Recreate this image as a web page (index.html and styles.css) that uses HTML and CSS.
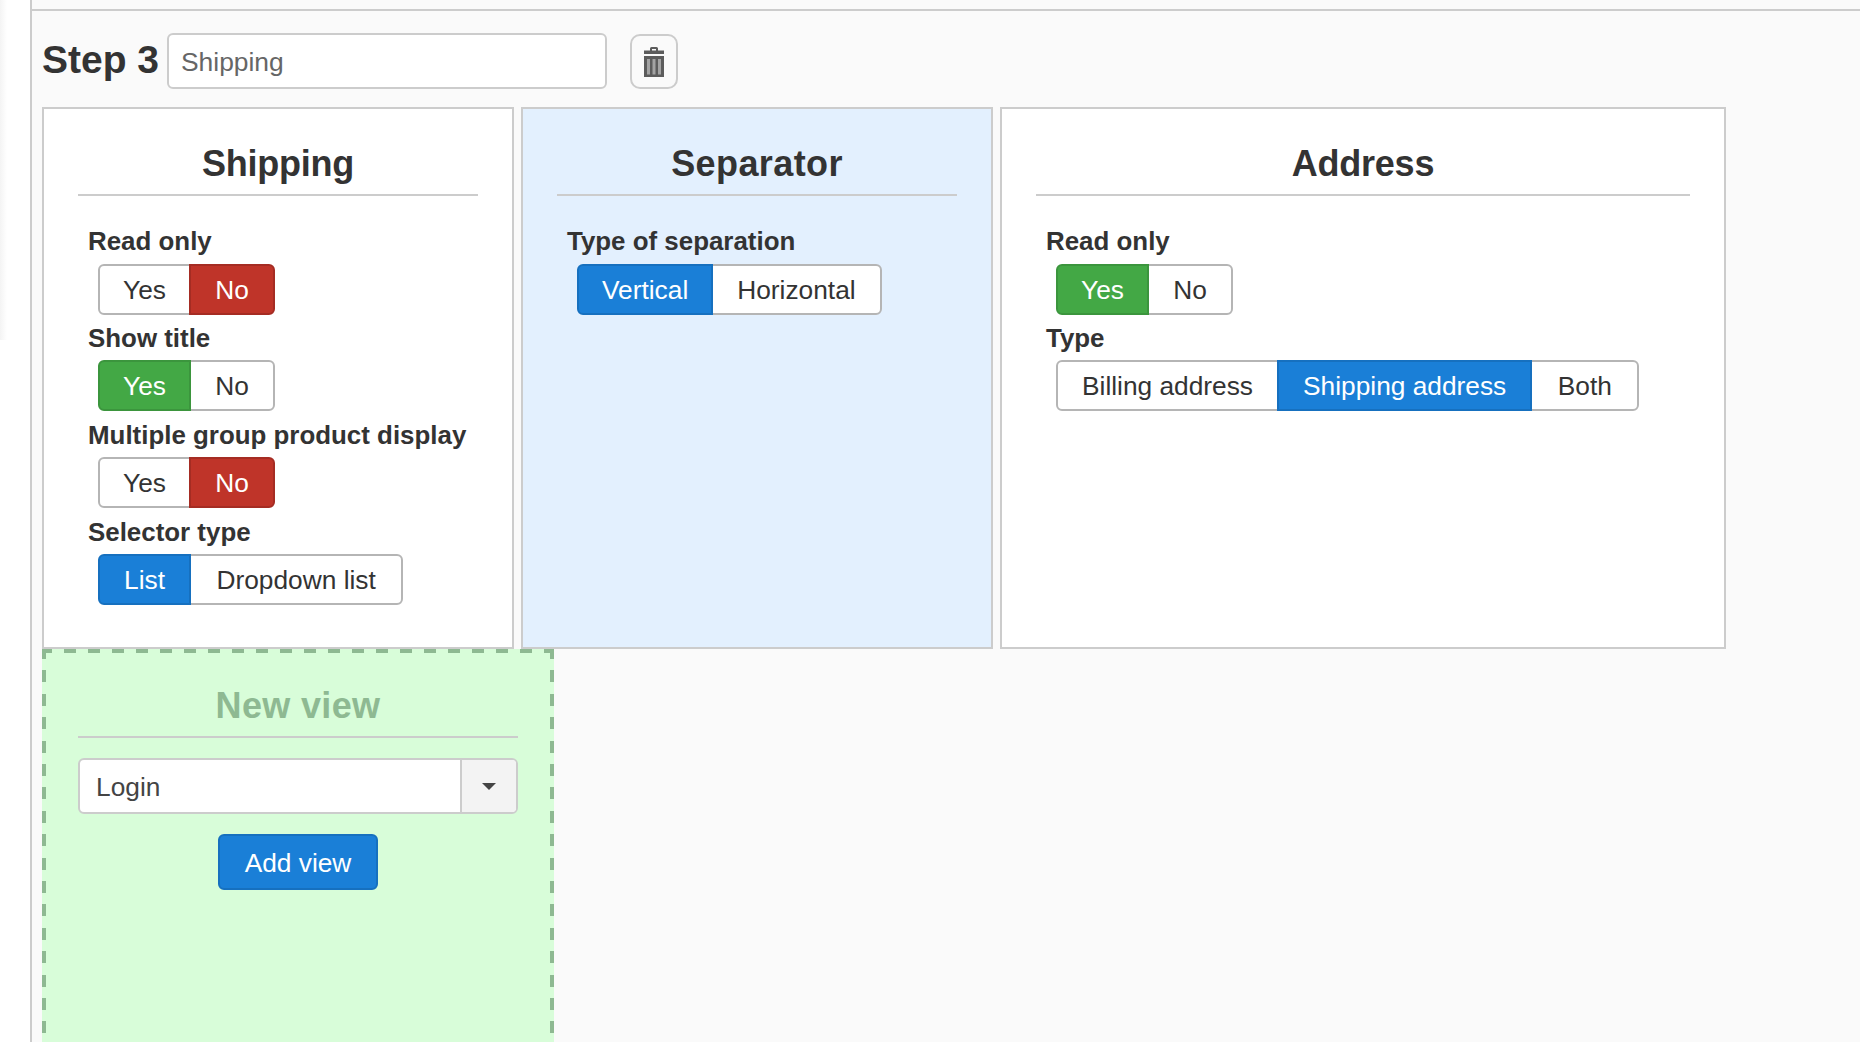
FILE: index.html
```html
<!DOCTYPE html>
<html lang="en">
<head>
<meta charset="utf-8">
<title>Step 3</title>
<link rel="stylesheet" href="styles.css">
</head>
<body>
<div class="page">
  <aside class="gutter"><div class="gutter-shade"></div></aside>
  <main class="main">
    <div class="topbar"></div>
    <div class="step-row">
      <h2 class="step-title">Step 3</h2>
      <input class="step-input" type="text" value="Shipping">
      <button class="trash-btn" type="button" aria-label="Delete">
        <svg class="trash-icon" width="20" height="30" viewBox="0 0 20 30">
          <rect class="trash-stripe" x="0" y="9" width="20" height="21"/>
          <path class="trash-fill" fill-rule="evenodd" d="M6 3.500V1.500Q6 0 7.500 0h5Q14 0 14 1.500V3.500H20V7H0V3.500ZM8 3.500h4V2H8ZM0 9H20V30H0ZM3 12V27.500H6V12ZM8.500 12V27.500H11.500V12ZM14 12V27.500H17V12Z"/>
        </svg>
      </button>
    </div>
    <div class="cards">
      <section class="card card-shipping">
        <h3 class="card-title">Shipping</h3>
        <div class="fields">
          <div class="field">
            <div class="field-label">Read only</div>
            <div class="btn-group"><span class="seg seg-lead">Yes</span><span class="seg seg-trail seg-red">No</span></div>
          </div>
          <div class="field">
            <div class="field-label">Show title</div>
            <div class="btn-group"><span class="seg seg-lead seg-green">Yes</span><span class="seg seg-trail">No</span></div>
          </div>
          <div class="field">
            <div class="field-label">Multiple group product display</div>
            <div class="btn-group"><span class="seg seg-lead">Yes</span><span class="seg seg-trail seg-red">No</span></div>
          </div>
          <div class="field">
            <div class="field-label">Selector type</div>
            <div class="btn-group"><span class="seg seg-lead seg-blue">List</span><span class="seg seg-roomy">Dropdown list</span></div>
          </div>
        </div>
      </section>
      <section class="card card-separator">
        <h3 class="card-title">Separator</h3>
        <div class="fields">
          <div class="field">
            <div class="field-label">Type of separation</div>
            <div class="btn-group"><span class="seg seg-tight seg-blue">Vertical</span><span class="seg">Horizontal</span></div>
          </div>
        </div>
      </section>
      <section class="card card-address">
        <h3 class="card-title">Address</h3>
        <div class="fields">
          <div class="field">
            <div class="field-label">Read only</div>
            <div class="btn-group"><span class="seg seg-lead seg-green">Yes</span><span class="seg seg-trail">No</span></div>
          </div>
          <div class="field">
            <div class="field-label">Type</div>
            <div class="btn-group"><span class="seg">Billing address</span><span class="seg seg-blue">Shipping address</span><span class="seg seg-roomy">Both</span></div>
          </div>
        </div>
      </section>
      <section class="card card-new">
        <h3 class="card-title">New view</h3>
        <div class="select">
          <span class="select-value">Login</span>
          <span class="select-arrow"><span class="caret"></span></span>
        </div>
        <div class="add-row"><button class="add-btn" type="button">Add view</button></div>
      </section>
    </div>
  </main>
</div>
</body>
</html>
```
FILE: styles.css
```css
* { box-sizing: border-box; }
html, body { margin: 0; height: 100%; overflow: hidden; background: #fff; }
body { font-family: "Liberation Sans", Arial, sans-serif; color: #333; }

.page { display: flex; height: 1042px; overflow: hidden; }

.gutter { width: 30px; flex: none; background: #fff; }
.gutter-shade { width: 7px; height: 340px; background: linear-gradient(to right, #f4f4f4, #fff); }

.main { flex: 1; min-width: 0; background: #fafafa; border-left: 2px solid #ccc; }
.topbar { height: 11px; border-bottom: 2px solid #ccc; }

.step-row { display: flex; align-items: flex-start; padding: 22px 0 0 10px; height: 96px; }
.step-title { margin: 0; width: 125px; flex: none; font-size: 39px; line-height: 54px; font-weight: 700; color: #333; }
.step-input { width: 440px; height: 56px; padding: 2px 12px 0; border: 2px solid #ccc; border-radius: 6px; background: #fff; font: 26.4px "Liberation Sans", Arial, sans-serif; color: #666; outline: none; }
.trash-btn { display: flex; align-items: center; justify-content: center; width: 48px; height: 55px; margin: 1px 0 0 23px; padding: 0; border: 2px solid #ccc; border-radius: 10px; background: #fafafa; }
.trash-icon { display: block; }
.trash-fill { fill: #5c5c5c; }
.trash-stripe { fill: #a3a3a3; }

.cards { display: flex; flex-wrap: wrap; align-items: stretch; column-gap: 7px; padding-left: 10px; }
.card { border: 2px solid #ccc; background: #fff; padding: 0 34px 42px; }
.card-shipping { width: 472px; }
.card-separator { width: 472px; background: #e3f0fe; }
.card-address { width: 726px; }
.card-new {
  width: 512px; height: 420px; padding: 0 36px; border: 0;
  background-color: #d8fdd9;
  background-image:
    repeating-linear-gradient(90deg, #8eb992 0 12px, transparent 12px 24px),
    repeating-linear-gradient(180deg, #8eb992 0 12px, transparent 12px 23.4px),
    repeating-linear-gradient(180deg, #8eb992 0 12px, transparent 12px 23.4px);
  background-size: 100% 4px, 4px 100%, 4px 100%;
  background-position: -2px 0, 0 -2px, 100% -2px;
  background-repeat: no-repeat;
}

.card-title { margin: 0; height: 87px; padding-top: 30px; border-bottom: 2px solid #ccc; text-align: center; font-size: 36px; line-height: 50px; font-weight: 700; color: #333; letter-spacing: -0.25px; }
.card-separator .card-title { letter-spacing: 0.4px; }
.card-new .card-title { color: #8eb992; height: 89px; padding-top: 32px; letter-spacing: 0.35px; }

.fields { padding: 21px 0 0 10px; }
.field-label { height: 46px; font-size: 25.9px; line-height: 48px; font-weight: 700; color: #333; white-space: nowrap; }

.btn-group { display: flex; width: max-content; margin-left: 10px; height: 51px; }
.field:first-child .btn-group { margin-top: 1px; margin-bottom: -1px; }
.seg { position: relative; display: flex; align-items: center; justify-content: center; height: 51px; padding: 2px 24px 0; background: #fff; border: 2px solid #b5b5b5; font-size: 26.3px; color: #333; white-space: nowrap; }
.seg + .seg { margin-left: -2px; }
.seg:first-child { border-radius: 6px 0 0 6px; }
.seg:last-child { border-radius: 0 6px 6px 0; }
.seg-lead { width: 93px; padding-left: 0; padding-right: 0; }
.seg-trail { width: 86px; padding-left: 0; padding-right: 0; }
.seg-roomy { padding-left: 25.500px; padding-right: 25.500px; }
.seg-tight { padding-left: 23px; padding-right: 23px; }
.seg-blue { z-index: 1; background: #1a7fd7; border-color: #1670bf; color: #fff; }
.seg-red { z-index: 1; background: #bf3429; border-color: #a52c23; color: #fff; }
.seg-green { z-index: 1; background: #43a845; border-color: #3b953d; color: #fff; }

.select { display: flex; height: 56px; margin-top: 20px; background: #fff; border: 2px solid #ccc; border-radius: 6px; overflow: hidden; }
.select-value { flex: 1; padding-left: 16px; font-size: 26.3px; line-height: 54px; color: #444; }
.select-arrow { display: flex; align-items: center; justify-content: center; width: 56px; flex: none; background: #f3f3f3; border-left: 2px solid #ccc; }
.caret { width: 0; height: 0; border-left: 7px solid transparent; border-right: 7px solid transparent; border-top: 7px solid #444; }

.add-row { display: flex; justify-content: center; margin-top: 20px; }
.add-btn { width: 160px; height: 56px; padding: 2px 0 0; background: #1a7fd7; border: 2px solid #1670bf; border-radius: 6px; color: #fff; font: 26.3px "Liberation Sans", Arial, sans-serif; }
```
